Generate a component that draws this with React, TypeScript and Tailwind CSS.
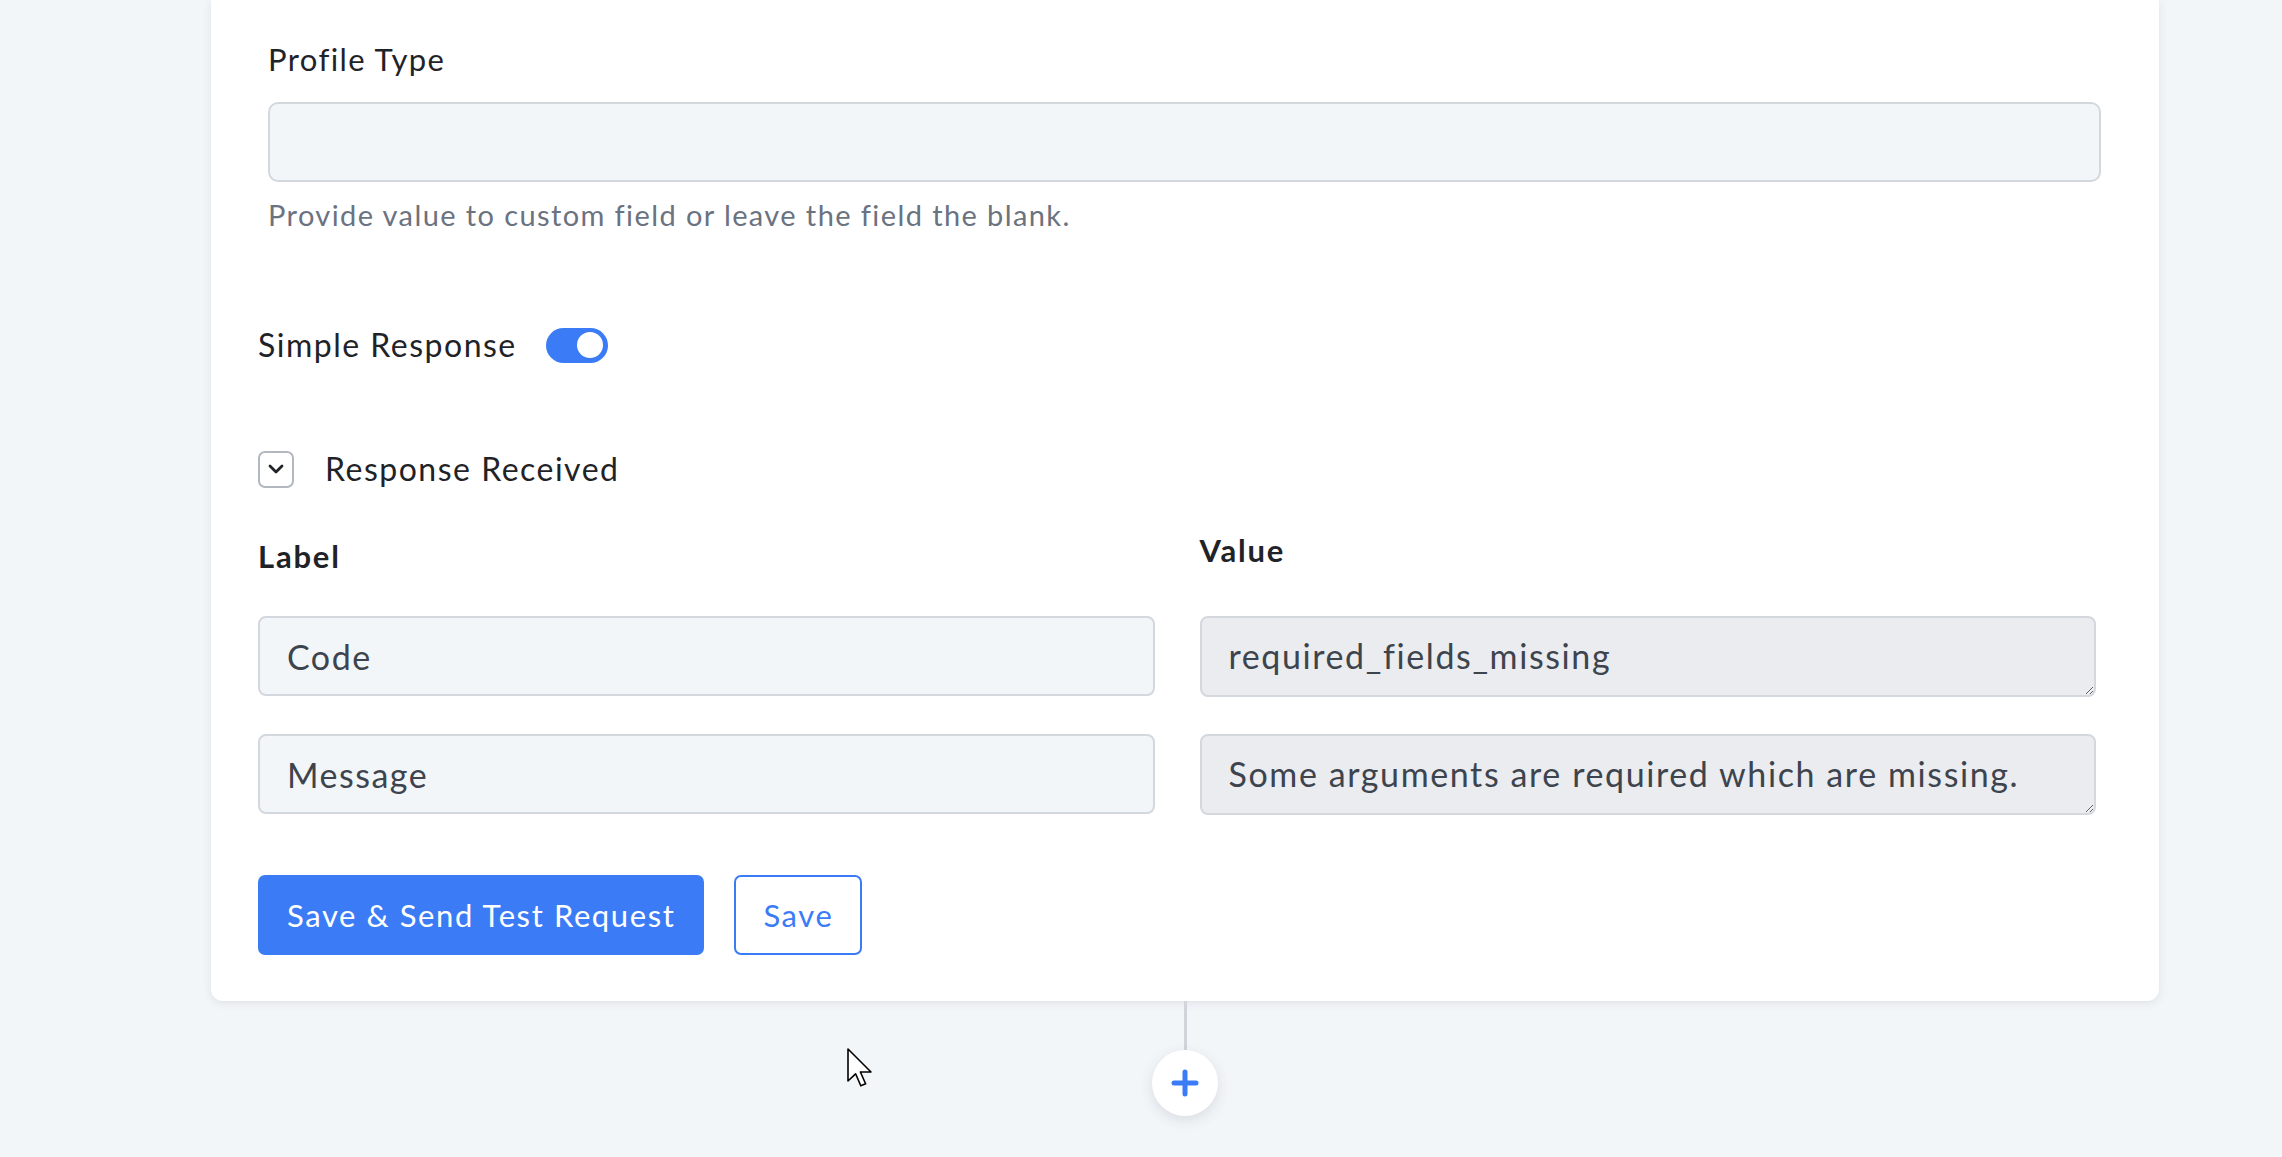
import React from 'react';

const font = { fontFamily: 'Lato, "Noto Sans", sans-serif' };

const Toggle = () => (
  <button
    type="button"
    className="relative flex h-[35px] w-[62px] items-center rounded-full bg-[#3b7cf6] px-[5px]"
  >
    <span className="ml-auto block h-[26px] w-[26px] rounded-full bg-white" />
  </button>
);

const Chevron = () => (
  <span className="flex h-[37px] w-[36px] items-center justify-center rounded-[7px] border-2 border-[#b3b8c0] bg-white">
    <svg width="16" height="10" viewBox="0 0 16 10" fill="none">
      <path d="M2 2l6 6 6-6" stroke="#1f2328" strokeWidth="2.8" strokeLinecap="round" strokeLinejoin="round" />
    </svg>
  </span>
);

const TextInput = ({ value }: { value: string }) => (
  <input
    readOnly
    value={value}
    className="h-[80px] w-full rounded-[8px] border-2 border-[#d3d8de] bg-[#f3f6f9] px-[27px] text-[34px] tracking-[1.5px] text-[#3d444d] outline-none"
    style={font}
  />
);

const ValueBox = ({ value }: { value: string }) => (
  <textarea
    readOnly
    rows={1}
    value={value}
    className="block h-[81px] w-full overflow-hidden rounded-[8px] border-2 border-[#d3d8de] bg-[#eaecef] px-[27px] pt-[18px] text-[34px] leading-[40px] tracking-[1.6px] text-[#3d444d] outline-none"
    style={font}
  />
);

const rows = [
  { label: 'Code', value: 'required_fields_missing' },
  { label: 'Message', value: 'Some arguments are required which are missing.' },
];

export default function App() {
  return (
    <div className="relative min-h-[1157px] w-full overflow-hidden bg-[#f3f6f9]" style={font}>
      <div className="ml-[211px] flex w-[1948px] flex-col items-center">
        <div className="w-full rounded-b-[12px] bg-white pb-[46px] pl-[47px] pr-[63px] pt-[39px] shadow-[0_2px_10px_rgba(30,41,59,0.10)]">
          {/* custom field */}
          <div className="ml-[10px] w-[1833px]">
            <label className="block text-[31px] leading-[40px] tracking-[1.4px] text-[#1f2328]">Profile Type</label>
            <input
              className="mt-[23px] h-[80px] w-full rounded-[10px] border-2 border-[#d3d8de] bg-[#f3f6f9] px-[27px] text-[29px] outline-none"
              style={font}
            />
            <p className="mt-[15px] text-[29px] leading-[36px] tracking-[1.4px] text-[#6b7280]">
              Provide value to custom field or leave the field the blank.
            </p>
          </div>

          <div className="mt-[92px] flex h-[40px] items-center gap-[29px]">
            <span className="text-[32px] tracking-[1.5px] text-[#1f2328]">Simple Response</span>
            <Toggle />
          </div>

          <div className="mt-[84px] flex h-[40px] items-center gap-[31px]">
            <Chevron />
            <span className="text-[32px] tracking-[1.5px] text-[#1f2328]">Response Received</span>
          </div>

          <div className="mt-[41px] grid grid-cols-2 gap-x-[45px]">
            <div className="pt-[6px] text-[31px] font-bold leading-[40px] tracking-[1.8px] text-[#1f2328]">Label</div>
            <div className="text-[31px] font-bold leading-[40px] tracking-[1.8px] text-[#1f2328]">Value</div>
            {rows.map((r, i) => (
              <React.Fragment key={r.label}>
                <div className={i === 0 ? 'mt-[40px]' : 'mt-[37px]'}>
                  <TextInput value={r.label} />
                </div>
                <div className={i === 0 ? 'mt-[40px]' : 'mt-[37px]'}>
                  <ValueBox value={r.value} />
                </div>
              </React.Fragment>
            ))}
          </div>

          <div className="mt-[60px] flex gap-[30px]">
            <button
              type="button"
              className="h-[80px] rounded-[7px] bg-[#3b7cf6] px-[29px] text-[31px] tracking-[1.6px] text-white"
              style={font}
            >
              Save &amp; Send Test Request
            </button>
            <button
              type="button"
              className="h-[80px] rounded-[7px] border-2 border-[#3b7cf6] bg-white px-[27px] text-[31px] tracking-[1.6px] text-[#3b7cf6]"
              style={font}
            >
              Save
            </button>
          </div>
        </div>

        {/* connector to next step */}
        <div className="h-[49px] w-[3px] bg-[#d1d5db]" />
        <button
          type="button"
          className="flex h-[66px] w-[66px] items-center justify-center rounded-full bg-white shadow-[0_4px_14px_rgba(30,41,59,0.12)]"
        >
          <svg width="30" height="30" viewBox="0 0 30 30">
            <path d="M15 4v22M4 15h22" stroke="#3b7cf6" strokeWidth="5" strokeLinecap="round" />
          </svg>
        </button>
      </div>

      {/* mouse pointer */}
      <svg
        className="absolute left-[847px] top-[1048px]"
        width="26"
        height="40"
        viewBox="0 0 13 20"
      >
        <path
          d="M0.5 0.5v16l3.8-3.6 2.6 6 2.4-1-2.6-5.9h5.3z"
          fill="#fff"
          stroke="#000"
          strokeWidth="0.8"
          strokeLinejoin="round"
        />
      </svg>
    </div>
  );
}
